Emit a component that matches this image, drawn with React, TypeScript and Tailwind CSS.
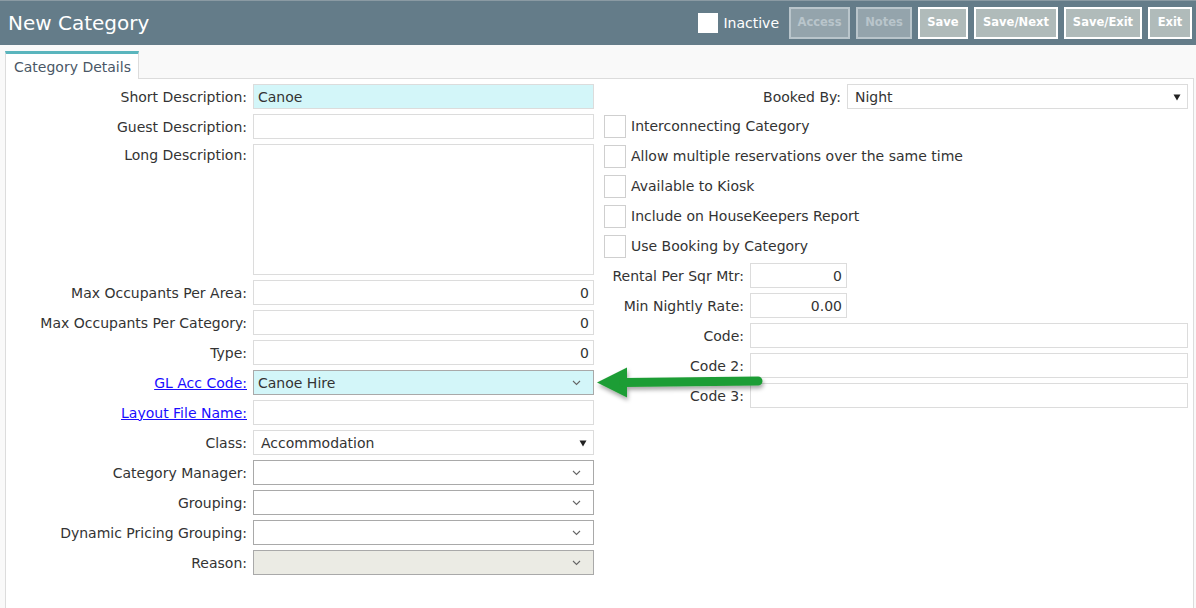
import React from 'react';

const FONT = "font-['DejaVu_Sans',Verdana,sans-serif]";

function Chevron() {
  return (
    <svg width="9" height="6" viewBox="0 0 9 6" className="shrink-0">
      <path d="M1 1l3.5 3.5L8 1" fill="none" stroke="#666" strokeWidth="1.1" />
    </svg>
  );
}

function Caret() {
  return (
    <svg width="8" height="7" viewBox="0 0 8 7" className="shrink-0">
      <path d="M0.5 0.5h7L4 6.5z" fill="#222" />
    </svg>
  );
}

function TextBox({ value, right, cyan, h = 'h-[25px]' }: { value?: string; right?: boolean; cyan?: boolean; h?: string }) {
  return (
    <div
      className={`${h} w-full border border-[#dcdcdc] px-[4px] pt-[1px] text-[14px] leading-[23px] text-[#333] ${
        cyan ? 'bg-[#d3f6f9]' : 'bg-white'
      } ${right ? 'text-right' : ''}`}
    >
      {value}
    </div>
  );
}

function Combo({ value, cyan, disabled }: { value?: string; cyan?: boolean; disabled?: boolean }) {
  const bg = cyan ? 'bg-[#d3f6f9]' : disabled ? 'bg-[#ebebe4]' : 'bg-white';
  return (
    <div className={`flex h-[25px] w-full items-center justify-between border border-[#a9a9a9] pl-[4px] pr-[12px] pt-[1px] text-[14px] text-[#333] ${bg}`}>
      <span>{value}</span>
      <Chevron />
    </div>
  );
}

function NativeSelect({ value }: { value: string }) {
  return (
    <div className="flex h-[25px] w-full items-center justify-between border border-[#dcdcdc] bg-white pl-[7px] pr-[6px] pt-[1px] text-[14px] text-[#333]">
      <span>{value}</span>
      <Caret />
    </div>
  );
}

function Row({ label, link, children, tall }: { label: string; link?: boolean; children: React.ReactNode; tall?: boolean }) {
  return (
    <div className={`flex gap-[6px] ${tall ? 'items-start' : 'items-center'}`}>
      <div className="w-[241px] shrink-0 text-right text-[14px] leading-[22px]">
        {link ? <a className="cursor-pointer text-[#1a0dff] underline">{label}</a> : <span className="text-[#333]">{label}</span>}
      </div>
      <div className="w-[341px] shrink-0">{children}</div>
    </div>
  );
}

function RightRow({ label, children, labelW = 'w-[140px]' }: { label: string; children: React.ReactNode; labelW?: string }) {
  return (
    <div className="flex items-center gap-[6px]">
      <div className={`${labelW} shrink-0 text-right text-[14px] leading-[22px] text-[#333]`}>{label}</div>
      {children}
    </div>
  );
}

function Check({ label }: { label: string }) {
  return (
    <div className="flex h-[24px] items-center gap-[5px]">
      <div className="h-[23px] w-[22px] shrink-0 border border-[#cfcfcf] bg-white" />
      <span className="text-[14px] text-[#333]">{label}</span>
    </div>
  );
}

function HeaderButton({ label, w, disabled }: { label: string; w: string; disabled?: boolean }) {
  return (
    <button
      className={`${w} h-[32px] border-2 text-[11.5px] font-bold ${
        disabled ? 'border-[#b9c5cb] bg-[#94a4ac] text-[#b9c5cb]' : 'border-white bg-[#b0bbba] text-white'
      }`}
    >
      {label}
    </button>
  );
}

export default function App() {
  return (
    <div className={`relative h-[608px] w-[1196px] overflow-hidden bg-[#f9f9f9] ${FONT}`}>
      <header className="flex h-[45px] items-center justify-between border-t border-[#8a9aa3] bg-[#647c89] pl-[8px] pr-[4px]">
        <h1 className="text-[20px] text-white">New Category</h1>
        <div className="flex items-center gap-[6px]">
          <div className="mr-[4px] flex items-center gap-[5px]">
            <div className="h-[20px] w-[20px] bg-white" />
            <span className="text-[14px] text-white">Inactive</span>
          </div>
          <HeaderButton label="Access" w="w-[61px]" disabled />
          <HeaderButton label="Notes" w="w-[56px]" disabled />
          <HeaderButton label="Save" w="w-[50px]" />
          <HeaderButton label="Save/Next" w="w-[84px]" />
          <HeaderButton label="Save/Exit" w="w-[78px]" />
          <HeaderButton label="Exit" w="w-[44px]" />
        </div>
      </header>

      <div className="pl-[5px] pr-[2px] pt-[6px]">
        <div className="relative z-10 -mb-[1px] flex h-[28px] w-[134px] items-center border-x border-t-[3px] border-x-[#dcdcdc] border-t-[#5ab5bd] bg-white pl-[8px] pt-[1px] text-[14px] text-[#4a5766]">
          Category Details
        </div>
        <div className="flex h-[540px] gap-[10px] border border-[#dcdcdc] bg-white pt-[5px]">
          <div className="flex flex-col gap-[5px]">
            <Row label="Short Description:">
              <TextBox value="Canoe" cyan />
            </Row>
            <Row label="Guest Description:">
              <TextBox />
            </Row>
            <Row label="Long Description:" tall>
              <TextBox h="h-[131px]" />
            </Row>
            <Row label="Max Occupants Per Area:">
              <TextBox value="0" right />
            </Row>
            <Row label="Max Occupants Per Category:">
              <TextBox value="0" right />
            </Row>
            <Row label="Type:">
              <TextBox value="0" right />
            </Row>
            <Row label="GL Acc Code:" link>
              <Combo value="Canoe Hire" cyan />
            </Row>
            <Row label="Layout File Name:" link>
              <TextBox />
            </Row>
            <Row label="Class:">
              <NativeSelect value="Accommodation" />
            </Row>
            <Row label="Category Manager:">
              <Combo />
            </Row>
            <Row label="Grouping:">
              <Combo />
            </Row>
            <Row label="Dynamic Pricing Grouping:">
              <Combo />
            </Row>
            <Row label="Reason:">
              <Combo disabled />
            </Row>
          </div>

          <div className="flex w-[584px] flex-col gap-[5px]">
            <RightRow label="Booked By:" labelW="w-[237px]">
              <div className="w-[341px]">
                <NativeSelect value="Night" />
              </div>
            </RightRow>
            <div className="flex flex-col gap-[6px]">
              <Check label="Interconnecting Category" />
              <Check label="Allow multiple reservations over the same time" />
              <Check label="Available to Kiosk" />
              <Check label="Include on HouseKeepers Report" />
              <Check label="Use Booking by Category" />
            </div>
            <RightRow label="Rental Per Sqr Mtr:">
              <div className="w-[97px]">
                <TextBox value="0" right />
              </div>
            </RightRow>
            <RightRow label="Min Nightly Rate:">
              <div className="w-[97px]">
                <TextBox value="0.00" right />
              </div>
            </RightRow>
            <RightRow label="Code:">
              <div className="w-[438px]">
                <TextBox />
              </div>
            </RightRow>
            <RightRow label="Code 2:">
              <div className="w-[438px]">
                <TextBox />
              </div>
            </RightRow>
            <RightRow label="Code 3:">
              <div className="w-[438px]">
                <TextBox />
              </div>
            </RightRow>
          </div>
        </div>
      </div>

      <svg className="pointer-events-none absolute left-[590px] top-[360px]" width="185" height="50" viewBox="0 0 185 50">
        <defs>
          <filter id="sh" x="-10%" y="-30%" width="120%" height="160%">
            <feDropShadow dx="1" dy="3" stdDeviation="2" floodColor="#000" floodOpacity="0.35" />
          </filter>
        </defs>
        <g filter="url(#sh)" fill="#1f9d34">
          <path d="M7 22.5L37 7.5v30z" />
          <line x1="34" y1="22.5" x2="168" y2="21" stroke="#1f9d34" strokeWidth="9" strokeLinecap="round" />
        </g>
      </svg>
    </div>
  );
}
